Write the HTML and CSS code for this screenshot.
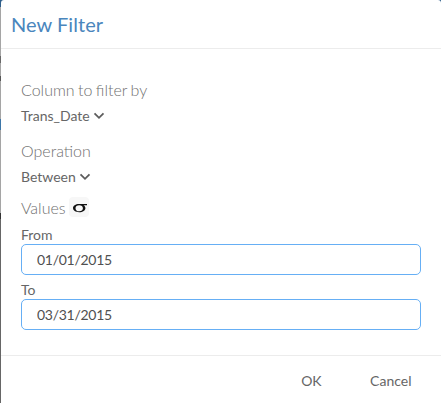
FILE: index.html
```html
<!DOCTYPE html>
<html lang="en">
<head>
<meta charset="utf-8">
<title>New Filter</title>
<link rel="stylesheet" href="styles.css">
</head>
<body>
<div class="dialog">
  <header class="dialog-header"><h1 class="title">New Filter</h1></header>
  <main class="dialog-body">
    <div class="label label-column">Column to filter by</div>
    <div class="select">Trans_Date
      <svg class="chevron" viewBox="0 0 12 8"><path d="M1.500 1.300 6 5.800 10.500 1.300"/></svg>
    </div>
    <div class="label">Operation</div>
    <div class="select">Between
      <svg class="chevron" viewBox="0 0 12 8"><path d="M1.500 1.300 6 5.800 10.500 1.300"/></svg>
    </div>
    <div class="label label-values">Values
      <span class="sigma"><svg viewBox="0 0 20 20"><path fill-rule="evenodd" d="M18 7H10C6.500 7 4 8.700 4 11S6.500 15.200 10.200 15.200 16.400 13.500 16.400 11.200C16.400 10 15.700 9.100 14.600 8.300H18ZM10.200 8.200C12.500 8.200 13.900 9.400 13.900 11.300S12.500 14.300 10.200 14.300 6.500 13.100 6.500 11.200 7.900 8.200 10.200 8.200Z"/></svg></span>
    </div>
    <label class="field"><span class="field-name">From</span><input class="date" type="text" value="01/01/2015"></label>
    <label class="field"><span class="field-name">To</span><input class="date" type="text" value="03/31/2015"></label>
  </main>
  <footer class="dialog-footer"><button class="action">OK</button><button class="action">Cancel</button></footer>
</div>
</body>
</html>
```
FILE: styles.css
```css
* { box-sizing: border-box; }
body {
  margin: 0;
  height: 403px;
  padding-left: 1px;
  overflow: hidden;
  font-family: Lato, sans-serif;
  color: #666;
  background: linear-gradient(#2f5f8b 0 7px, #a5a5a5 7px 56px, #686868 56px 63px, #a5a5a5 63px 76px, #555 76px 81px, #a5a5a5 81px 119px, #3d76a8 119px 130px, #a5a5a5 130px 213px, #333 213px 219px, #666 219px) 0 0 / 100% 403px no-repeat;
}
.dialog {
  display: flex;
  flex-direction: column;
  height: 403px;
  background: #fff;
  border-radius: 3px 3px 0 0;
}
.dialog-header {
  height: 49px;
  padding: 12px 10px 0;
  border-bottom: 1px solid #ececec;
}
.title {
  margin: 0;
  font-size: 20px;
  line-height: 24px;
  font-weight: 400;
  letter-spacing: 0.05px;
  color: #4a86bd;
}
.dialog-body { height: 306px; padding: 30px 20px 0; }
.label {
  height: 22px;
  font-size: 16px;
  line-height: 22px;
  font-weight: 300;
  color: #707070;
}
.label-column { word-spacing: -0.9px; }
.select {
  display: flex;
  align-items: center;
  gap: 3px;
  height: 29px;
  margin-bottom: 10px;
  font-size: 14px;
  line-height: 28px;
}
.chevron {
  width: 12px;
  height: 8px;
  fill: none;
  stroke: #5c5c5c;
  stroke-width: 1.8;
}
.label-values { display: flex; align-items: center; gap: 3px; margin-top: -4px; }
.sigma {
  width: 20px;
  height: 20px;
  margin-top: -2px;
  border-radius: 4px;
  background: #f7f7f7;
}
.sigma svg { display: block; width: 20px; height: 20px; fill: #111; }
.field { display: block; height: 55px; }
.field:first-of-type { margin-top: 1px; }
.field-name { display: block; height: 24px; padding-top: 6px; font-size: 14px; line-height: 17px; }
.date {
  display: block;
  width: 400px;
  height: 31px;
  padding: 0 15px;
  border: 1px solid #66aff5;
  border-radius: 5px;
  background: #fff;
  font: 14px Lato, sans-serif;
  letter-spacing: -0.27px;
  color: #505050;
  outline: 0;
}
.dialog-footer {
  display: flex;
  justify-content: flex-end;
  gap: 48.5px;
  height: 48px;
  padding: 0 29.5px 0 0;
  border-top: 1px solid #ececec;
}
.action {
  height: 49px;
  padding: 0;
  border: 0;
  background: none;
  font: 14px Lato, sans-serif;
  color: #666;
}
```
